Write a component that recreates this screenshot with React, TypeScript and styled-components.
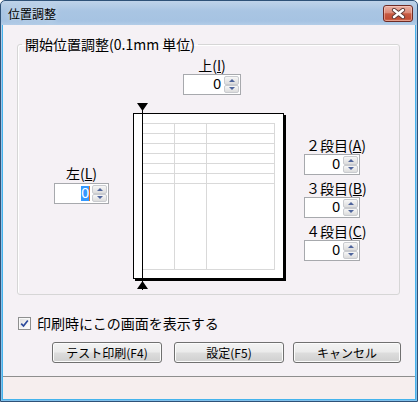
import React from "react";
import styled, { createGlobalStyle } from "styled-components";

const UI_FONT = `"Noto Sans CJK JP", "Noto Sans", sans-serif`;

const GlobalStyle = createGlobalStyle`
  html, body { margin: 0; padding: 0; background: #ffffff; }
  body { font-family: ${UI_FONT}; }
  * { box-sizing: border-box; }
`;

const Window = styled.div`
  width: 418px;
  height: 402px;
  display: flex;
  flex-direction: column;
  border: 1px solid #2f5278;
  border-radius: 5px 5px 0 0;
  background: linear-gradient(to bottom, #bfd3e9 0px, #a9c5e3 10px, #a6c3e2 20px, #b6cfe9 25px, #9fc6ea 60px, #7fc1ec 100%);
  padding: 0 1px 1px;
  overflow: hidden;
  font-family: ${UI_FONT};
  color: #000;
`;

const TitleBar = styled.div`
  height: 24px;
  flex: none;
  display: flex;
  align-items: flex-start;
  justify-content: space-between;
  padding: 0 3px 0 6px;
`;

const TitleText = styled.div`
  font-size: 12px;
  line-height: 26px;
  color: #000;
  text-shadow: 0 0 6px rgba(255, 255, 255, 0.7);
`;

const CloseButton = styled.div`
  margin-top: 4px;
  width: 30px;
  height: 17px;
  border: 1px solid #6e2b25;
  border-radius: 3px;
  background: linear-gradient(to bottom, #eab1a4 0%, #dc8a78 45%, #c75a42 52%, #c24e36 85%, #d57458 100%);
  box-shadow: inset 0 0 0 1px rgba(255, 220, 210, 0.45);
  display: flex;
  align-items: center;
  justify-content: center;
`;

const Client = styled.div`
  flex: 1;
  display: flex;
  flex-direction: column;
  background: #f5f1f5;
  border: 1px solid #45b3ec;
  border-top: none;
`;

const Group = styled.fieldset`
  margin: 11px 15px 0 14px;
  padding: 0 0 2px 0;
  min-width: 0;
  border: 1px solid #d6d6d6;
  border-radius: 3px;
  box-shadow: inset 1px 1px 0 #ffffff;
`;

const Legend = styled.legend`
  margin-left: 4px;
  padding: 0 3px;
  font-size: 14px;
  line-height: 16px;
  white-space: nowrap;
`;

const TopRow = styled.div`
  padding: 5px 0 0 165px;
`;

const Field = styled.div<{ $align?: "center" | "start" }>`
  display: flex;
  flex-direction: column;
  align-items: ${(p) => (p.$align === "start" ? "flex-start" : "center")};
`;

const FieldLabel = styled.div<{ $pad?: number; $gap?: number }>`
  font-size: 14px;
  line-height: 16px;
  white-space: nowrap;
  margin-bottom: ${(p) => p.$gap ?? 1}px;
  padding-left: ${(p) => p.$pad ?? 0}px;
`;

const LowerRow = styled.div`
  margin-top: 6px;
  display: flex;
  align-items: flex-start;
  padding-left: 36px;
`;

const LeftCol = styled.div`
  width: 55px;
  margin-top: 64px;
`;

const PreviewWrap = styled.div`
  margin-left: 22px;
  width: 156px;
  height: 191px;
  flex: none;
`;

const RightCol = styled.div`
  width: 56px;
  margin-left: 17px;
  margin-top: 36px;
  display: flex;
  flex-direction: column;
  gap: 5px;
`;

const SpinFrame = styled.div<{ $w: number }>`
  width: ${(p) => p.$w}px;
  height: 21px;
  display: flex;
  background: #ffffff;
  border: 1px solid #a7a9ad;
  padding: 1px;
`;

const SpinValue = styled.div`
  flex: 1;
  display: flex;
  align-items: center;
  justify-content: flex-end;
  padding-right: 3px;
  font-family: "Liberation Sans", sans-serif;
  font-size: 14px;
  line-height: 15px;
`;

const Selected = styled.span`
  background: #3399ff;
  color: #ffffff;
  box-shadow: 1px 0 0 #e2761f;
`;

const SpinButtons = styled.div`
  width: 15px;
  display: flex;
  flex-direction: column;
`;

const SpinBtn = styled.div`
  flex: 1;
  display: flex;
  align-items: center;
  justify-content: center;
  border: 1px solid #c9cbcf;
  border-radius: 2px;
  background: linear-gradient(to bottom, #f7f7f7 0%, #e9e9e9 50%, #dcdcdc 100%);
`;

const Arrow = styled.span<{ $dir: "up" | "down" }>`
  width: 0;
  height: 0;
  border-left: 3px solid transparent;
  border-right: 3px solid transparent;
  ${(p) =>
    p.$dir === "up"
      ? "border-bottom: 3px solid #4f659c;"
      : "border-top: 3px solid #4f659c;"}
`;

const CheckRow = styled.label`
  margin: 20px 0 0 15px;
  display: flex;
  align-items: center;
  gap: 6px;
  height: 16px;
  font-size: 14px;
  line-height: 16px;
`;

const CheckBox = styled.span`
  width: 13px;
  height: 13px;
  border: 1px solid #8e8f8f;
  background: linear-gradient(135deg, #dcdcdc 0%, #f4f4f4 60%, #ffffff 100%);
  box-shadow: inset 0 0 0 1px #f8f8f8;
  display: flex;
  align-items: center;
  justify-content: center;
`;

const ButtonRow = styled.div`
  margin: 11px 0 0 49px;
  display: flex;
`;

const Button = styled.div<{ $w: number; $ml?: number }>`
  width: ${(p) => p.$w}px;
  height: 21px;
  margin-left: ${(p) => p.$ml ?? 0}px;
  border: 1px solid #707070;
  border-radius: 3px;
  background: linear-gradient(to bottom, #f3f3f3 0%, #ebebeb 48%, #dddddd 52%, #cfcfcf 100%);
  box-shadow: inset 0 0 0 1px #fbfbfb;
  display: flex;
  align-items: center;
  justify-content: center;
  font-size: 12px;
  line-height: 14px;
  white-space: nowrap;
`;

const StatusBar = styled.div`
  margin-top: auto;
  height: 23px;
  border-top: 1px solid #8e8e8e;
  background: #f6eeee;
`;

function Spin({ w, value, selected }: { w: number; value: string; selected?: boolean }) {
  return (
    <SpinFrame $w={w}>
      <SpinValue>{selected ? <Selected>{value}</Selected> : value}</SpinValue>
      <SpinButtons>
        <SpinBtn>
          <Arrow $dir="up" />
        </SpinBtn>
        <SpinBtn>
          <Arrow $dir="down" />
        </SpinBtn>
      </SpinButtons>
    </SpinFrame>
  );
}

function PagePreview() {
  const hLines = [22.5, 32.5, 42.5, 52.5, 62.5, 72.5, 82.5, 168.5];
  const vLines = [43.5, 75.5, 143.5];
  return (
    <PreviewWrap>
      <svg width="156" height="191" viewBox="0 0 156 191" shapeRendering="crispEdges">
        <rect x="2.5" y="12.5" width="150" height="165" fill="#ffffff" stroke="#000000" strokeWidth="1" />
        <rect x="153" y="14" width="2" height="166" fill="#000000" />
        <rect x="4" y="178" width="151" height="2" fill="#000000" />
        {hLines.map((y) => (
          <line key={`h${y}`} x1="11" x2="144" y1={y} y2={y} stroke="#d9d9d9" strokeWidth="1" />
        ))}
        {vLines.map((x) => (
          <line key={`v${x}`} x1={x} x2={x} y1="22" y2="169" stroke="#d9d9d9" strokeWidth="1" />
        ))}
        <line x1="11.5" x2="11.5" y1="2" y2="189" stroke="#000000" strokeWidth="1" />
        <polygon points="6,2 17,2 11.5,10" fill="#000000" shapeRendering="auto" />
        <polygon points="6,188 17,188 11.5,180" fill="#000000" shapeRendering="auto" />
      </svg>
    </PreviewWrap>
  );
}

export default function App() {
  return (
    <>
      <GlobalStyle />
      <Window>
        <TitleBar>
          <TitleText>位置調整</TitleText>
          <CloseButton>
            <svg width="15" height="11" viewBox="0 0 15 11">
              <path d="M3 2 L12 9 M12 2 L3 9" stroke="#5e3a36" strokeWidth="4.2" strokeLinecap="round" />
              <path d="M3 2 L12 9 M12 2 L3 9" stroke="#ffffff" strokeWidth="2.4" strokeLinecap="round" />
            </svg>
          </CloseButton>
        </TitleBar>
        <Client>
          <Group>
            <Legend>開始位置調整(0.1mm 単位)</Legend>
            <TopRow>
              <Field style={{ width: 58 }}>
                <FieldLabel>
                  上(<u>I</u>)
                </FieldLabel>
                <Spin w={58} value="0" />
              </Field>
            </TopRow>
            <LowerRow>
              <LeftCol>
                <Field>
                  <FieldLabel $gap={2}>
                    左(<u>L</u>)
                  </FieldLabel>
                  <Spin w={55} value="0" selected />
                </Field>
              </LeftCol>
              <PagePreview />
              <RightCol>
                <Field $align="start">
                  <FieldLabel $pad={2}>
                    ２段目(<u>A</u>)
                  </FieldLabel>
                  <Spin w={56} value="0" />
                </Field>
                <Field $align="start">
                  <FieldLabel $pad={2}>
                    ３段目(<u>B</u>)
                  </FieldLabel>
                  <Spin w={56} value="0" />
                </Field>
                <Field $align="start">
                  <FieldLabel $pad={2}>
                    ４段目(<u>C</u>)
                  </FieldLabel>
                  <Spin w={56} value="0" />
                </Field>
              </RightCol>
            </LowerRow>
          </Group>
          <CheckRow>
            <CheckBox>
              <svg width="9" height="9" viewBox="0 0 9 9">
                <path d="M1.2 4.6 L3.5 7 L7.8 1.5" fill="none" stroke="#2b4a9c" strokeWidth="1.7" />
              </svg>
            </CheckBox>
            印刷時にこの画面を表示する
          </CheckRow>
          <ButtonRow>
            <Button $w={110}>テスト印刷(F4)</Button>
            <Button $w={110} $ml={12}>設定(F5)</Button>
            <Button $w={108} $ml={9}>キャンセル</Button>
          </ButtonRow>
          <StatusBar />
        </Client>
      </Window>
    </>
  );
}
